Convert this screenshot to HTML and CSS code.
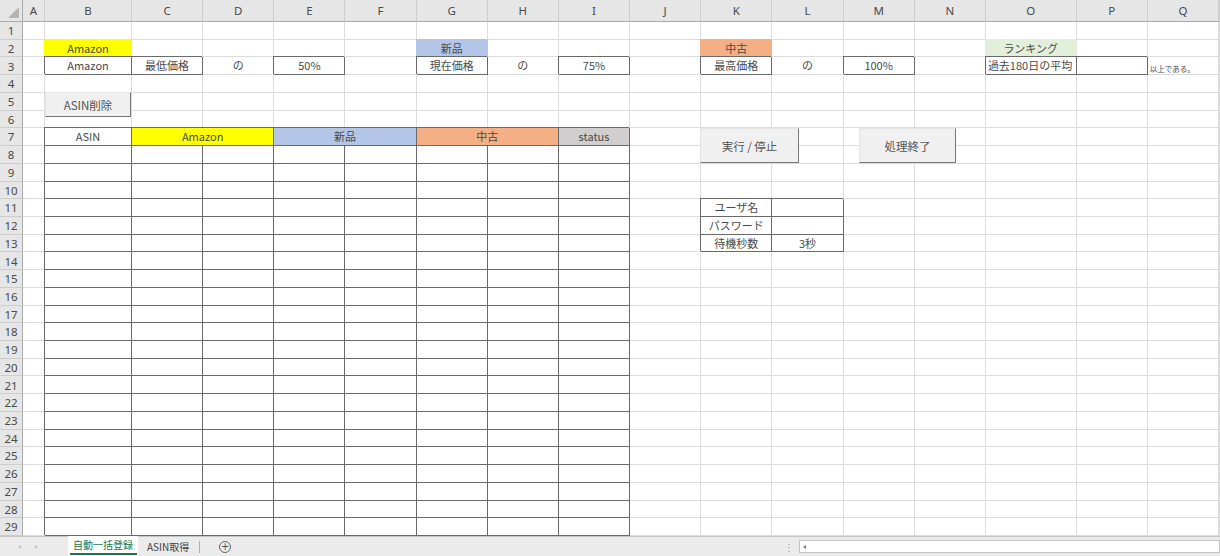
FILE: index.html
```html
<!DOCTYPE html>
<html lang="ja">
<head>
  <meta charset="UTF-8">
  <title>自動一括登録</title>
  <link rel="stylesheet" href="styles.css">
</head>
<body>

  <!-- Worksheet grid (cells are built by sheet.js) -->
  <div class="sheet-wrap">
    <div id="sheet" class="sheet"></div>

    <!-- Form buttons sitting on top of the cells -->
    <button class="form-btn btn-delete">ASIN削除</button>
    <button class="form-btn btn-run">実行 / 停止</button>
    <button class="form-btn btn-end">処理終了</button>
  </div>

  <!-- Sheet tabs -->
  <div class="tabbar">
    <div class="tab-nav">
      <span class="nav-arrow prev"></span>
      <span class="nav-arrow next"></span>
    </div>
    <div class="tab active">自動一括登録</div>
    <div class="tab">ASIN取得</div>
    <span class="tab-sep"></span>
    <span class="add-sheet">+</span>
    <span class="dots">⋮</span>
    <div class="hscroll">
      <span class="hscroll-btn"></span>
    </div>
  </div>

  <script src="sheet.js"></script>
</body>
</html>
```

FILE: styles.css
```css
/* Basic page styling */
body {
  margin: 0;
  padding: 0;
  width: 1220px;
  height: 556px;
  overflow: hidden;
  background: #fff;
  font-family: "Noto Sans CJK JP", "Noto Sans", sans-serif;
  color: #333;
}

.sheet-wrap {
  position: relative;
  height: 536px;
  overflow: hidden;
}

/* Grid of cells */
.sheet {
  display: grid;
  grid-template-columns: 23px 22px 87px repeat(12, 71.17px) 90.7px 71.3px 71.3px 1fr;
  grid-template-rows: 22px repeat(29, 1fr);
  height: 536px;
}
.cell {
  box-sizing: border-box;
  display: flex;
  align-items: center;
  justify-content: center;
  border-right: 1px solid #dcdcdc;
  border-bottom: 1px solid #dcdcdc;
  font-size: 11px;
  line-height: 1;
  white-space: nowrap;
  color: #4a4a4a;
}
.cell.span2 {
  grid-column: span 2;
}
.cell.left {
  justify-content: flex-start;
  padding-left: 2px;
}

/* Row / column headers */
.hdr {
  background-color: #e6e6e6;
  border-color: #cdcdcd;
  color: #4a4a4a;
  font-family: "Noto Sans", sans-serif;
  font-size: 11.5px;
}
.col-hdr {
  border-bottom-color: #ababab;
}
.row-hdr {
  border-right-color: #ababab;
  padding-top: 1px;
}
.corner {
  position: relative;
  border-right-color: #ababab;
  border-bottom-color: #ababab;
}
.corner::after {
  content: "";
  position: absolute;
  right: 3px;
  bottom: 3px;
  width: 11px;
  height: 11px;
  background: #b4b4b4;
  clip-path: polygon(100% 0, 100% 100%, 0 100%);
}

/* Bordered cells */
.box {
  border-color: #6a6a6a;
  box-shadow: -1px -1px 0 0 #6a6a6a;
}

/* Cell fills */
.fill-yellow { background-color: #ffff00; }
.fill-blue { background-color: #b4c6e7; }
.fill-orange { background-color: #f4b084; }
.fill-green { background-color: #e2efda; }
.fill-gray { background-color: #d0cece; }
.fill-yellow:not(.box) { border-color: #ffff00; box-shadow: -1px -1px 0 0 #ffff00; }
.fill-blue:not(.box) { border-color: #b4c6e7; box-shadow: -1px -1px 0 0 #b4c6e7; }
.fill-orange:not(.box) { border-color: #f4b084; box-shadow: -1px -1px 0 0 #f4b084; }
.fill-green:not(.box) { border-color: #e2efda; box-shadow: -1px -1px 0 0 #e2efda; }

/* Small note text */
.note {
  justify-content: flex-start;
  align-items: flex-end;
  padding: 0 0 2px 2px;
  font-size: 7.5px;
}

/* Form control buttons */
.form-btn {
  position: absolute;
  box-sizing: border-box;
  margin: 0;
  padding: 0;
  background-color: #f0f0f0;
  border: 1px solid;
  border-color: #e4e4e4 #777 #777 #e4e4e4;
  font-family: "Noto Sans CJK JP", sans-serif;
  font-size: 11.5px;
  color: #555;
}
.btn-delete {
  left: 45px;
  top: 92px;
  width: 86px;
  height: 25px;
}
.btn-run {
  left: 700px;
  top: 128px;
  width: 99px;
  height: 35px;
}
.btn-end {
  left: 859px;
  top: 128px;
  width: 97px;
  height: 35px;
}

/* Sheet tab bar */
.tabbar {
  display: flex;
  align-items: stretch;
  height: 20px;
  box-sizing: border-box;
  background-color: #ebebeb;
  border-top: 1px solid #c6c6c6;
  font-size: 10px;
  white-space: nowrap;
}
.tab-nav {
  display: flex;
  align-items: center;
  gap: 14px;
  width: 68px;
  padding-left: 18px;
  box-sizing: border-box;
}
.nav-arrow {
  width: 0;
  height: 0;
  border-top: 2.5px solid transparent;
  border-bottom: 2.5px solid transparent;
}
.nav-arrow.prev { border-right: 3px solid #c2c2c2; }
.nav-arrow.next { border-left: 3px solid #c2c2c2; }
.tab {
  display: flex;
  align-items: center;
  padding: 0 10px 0 9px;
  color: #444;
  position: relative;
}
.tab.active {
  width: 70px;
  padding: 0 0 3px;
  box-sizing: border-box;
  justify-content: center;
  background-color: #fff;
  color: #217346;
  margin-top: -1px;
}
.tab.active::after {
  content: "";
  position: absolute;
  left: 2px;
  right: 1px;
  bottom: 1px;
  height: 2px;
  background-color: #217346;
}
.tab-sep {
  align-self: center;
  width: 1px;
  height: 12px;
  background-color: #b0b0b0;
}
.add-sheet {
  align-self: center;
  display: flex;
  align-items: center;
  justify-content: center;
  width: 10px;
  height: 10px;
  margin-left: 19px;
  border: 1px solid #666;
  border-radius: 50%;
  font-family: "DejaVu Sans", sans-serif;
  font-size: 10px;
  line-height: 1;
  color: #555;
}
.dots {
  align-self: center;
  margin-left: 553px;
  color: #9a9a9a;
  font-size: 10px;
}
.hscroll {
  flex: 1;
  display: flex;
  align-items: center;
  margin: 3px 0 3px 5px;
  background-color: #fff;
  border: 1px solid #c4c4c4;
}
.hscroll-btn {
  width: 0;
  height: 0;
  margin-left: 3px;
  border-top: 2.5px solid transparent;
  border-bottom: 2.5px solid transparent;
  border-right: 3px solid #777;
}
```

FILE: sheet.js
```js
// Build the worksheet: headers, cells and their contents
const COLS = ['A','B','C','D','E','F','G','H','I','J','K','L','M','N','O','P','Q',''];
const ROWS = 29;

// Cell contents and formats keyed by address
const cells = {
  B2: { text: 'Amazon', cls: 'fill-yellow' },
  G2: { text: '新品', cls: 'fill-blue' },
  K2: { text: '中古', cls: 'fill-orange' },
  O2: { text: 'ランキング', cls: 'fill-green' },

  B3: { text: 'Amazon', cls: 'box' },
  C3: { text: '最低価格', cls: 'box' },
  D3: { text: 'の' },
  E3: { text: '50%', cls: 'box' },
  G3: { text: '現在価格', cls: 'box' },
  H3: { text: 'の' },
  I3: { text: '75%', cls: 'box' },
  K3: { text: '最高価格', cls: 'box' },
  L3: { text: 'の' },
  M3: { text: '100%', cls: 'box' },
  O3: { text: '過去180日の平均', cls: 'box left' },
  P3: { cls: 'box' },
  Q3: { text: '以上である。', cls: 'note' },

  B7: { text: 'ASIN', cls: 'box' },
  C7: { text: 'Amazon', cls: 'box fill-yellow span2' },
  E7: { text: '新品', cls: 'box fill-blue span2' },
  G7: { text: '中古', cls: 'box fill-orange span2' },
  I7: { text: 'status', cls: 'box fill-gray' },

  K11: { text: 'ユーザ名', cls: 'box' },
  L11: { cls: 'box' },
  K12: { text: 'パスワード', cls: 'box' },
  L12: { cls: 'box' },
  K13: { text: '待機秒数', cls: 'box' },
  L13: { text: '3秒', cls: 'box' }
};

// ASIN list area: B8:I29 all bordered
for (let r = 8; r <= ROWS; r++) {
  ['B','C','D','E','F','G','H','I'].forEach(function(c) {
    cells[c + r] = { cls: 'box' };
  });
}

const sheet = document.getElementById('sheet');

function addCell(cls, text) {
  const div = document.createElement('div');
  div.className = 'cell ' + (cls || '');
  if (text) div.textContent = text;
  sheet.appendChild(div);
}

// Column header row
addCell('hdr corner');
COLS.forEach(function(c) {
  addCell('hdr col-hdr', c);
});

// Body rows
for (let r = 1; r <= ROWS; r++) {
  addCell('hdr row-hdr', String(r));
  for (let i = 0; i < COLS.length; i++) {
    const cell = cells[COLS[i] + r] || {};
    addCell(cell.cls, cell.text);
    if (cell.cls && cell.cls.indexOf('span2') !== -1) i++;
  }
}
```
